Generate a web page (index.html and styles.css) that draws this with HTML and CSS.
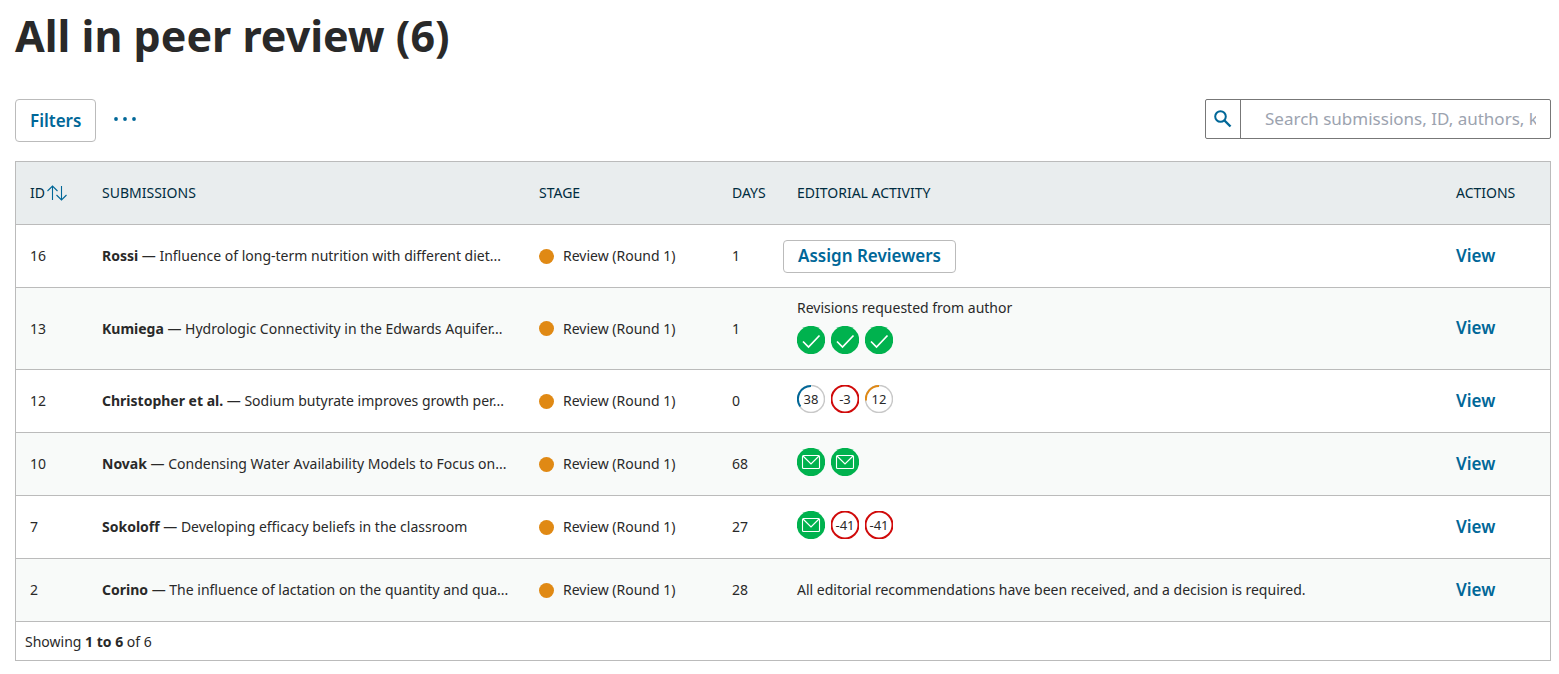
FILE: index.html
```html
<!DOCTYPE html>
<html lang="en">
<head>
<meta charset="utf-8">
<title>All in peer review</title>
<link rel="stylesheet" href="styles.css">
</head>
<body>
<svg class="sprite" aria-hidden="true">
  <symbol id="check" viewBox="0 0 28 28"><circle cx="14" cy="14" r="14.2" fill="#00b24e"/><path d="M6 15.500l5.500 5.500L22.500 9.500" fill="none" stroke="#fff" stroke-width="1.700"/></symbol>
  <symbol id="mail" viewBox="0 0 28 28"><circle cx="14" cy="14" r="14.200" fill="#00b24e"/><rect x="5.500" y="7.500" width="17" height="13" rx="1" fill="none" stroke="#fff" stroke-width="1.100"/><path d="M6 8l8 8 8-8" fill="none" stroke="#fff" stroke-width="1.200"/></symbol>
</svg>
<main class="page">
  <h1 class="title">All in peer review (6)</h1>
  <div class="toolbar">
    <button class="btn btn-filters" type="button">Filters</button>
    <button class="more" type="button" aria-label="More actions"><svg width="24" height="6" viewBox="0 0 24 6" fill="#006798"><circle cx="3" cy="3" r="1.900"/><circle cx="12" cy="3" r="1.900"/><circle cx="21" cy="3" r="1.900"/></svg></button>
    <form class="search">
      <label class="search-icon" for="search" aria-label="Search"><svg width="18" height="18" viewBox="0 0 18 18" fill="none" stroke="#006798"><circle cx="6.500" cy="6.500" r="5.300" stroke-width="2"/><path d="M10.500 10.500l6 6" stroke-width="2.400"/></svg></label>
      <input class="search-input" id="search" type="text" placeholder="Search submissions, ID, authors, keywords etc.">
    </form>
  </div>
  <section class="panel">
    <table class="table">
      <colgroup><col class="c-id"><col class="c-sub"><col class="c-stage"><col class="c-days"><col><col class="c-act"></colgroup>
      <thead>
        <tr>
          <th scope="col"><button class="sort" type="button">ID<svg width="20" height="16" viewBox="0 0 20 16" fill="none" stroke="#006798" stroke-width="1.100"><path d="M5.500 15V1M.5 6l5-5 5 5M14.500 1v14M9.500 10l5 5 5-5"/></svg></button></th>
          <th scope="col">SUBMISSIONS</th><th scope="col">STAGE</th><th scope="col">DAYS</th><th scope="col">EDITORIAL ACTIVITY</th><th scope="col">ACTIONS</th>
        </tr>
      </thead>
      <tbody>
        <tr><td>16</td><td class="name"><b>Rossi</b> — Influence of long-term nutrition with different diet...</td><td><span class="stage">Review (Round 1)</span></td><td>1</td><td class="flush"><button class="btn btn-small" type="button">Assign Reviewers</button></td><td><a class="view" href="#16">View</a></td></tr>
        <tr><td>13</td><td class="name"><b>Kumiega</b> — Hydrologic Connectivity in the Edwards Aquifer...</td><td><span class="stage">Review (Round 1)</span></td><td>1</td><td><div class="activity">Revisions requested from author<div class="icons"><svg class="ico"><use href="#check"/></svg><svg class="ico"><use href="#check"/></svg><svg class="ico"><use href="#check"/></svg></div></div></td><td><a class="view" href="#13">View</a></td></tr>
        <tr><td>12</td><td class="name"><b>Christopher et al.</b> — Sodium butyrate improves growth per...</td><td><span class="stage">Review (Round 1)</span></td><td>0</td><td><div class="icons">
          <span class="count"><svg class="ring" viewBox="0 0 28 28"><circle class="track" cx="14" cy="14" r="13.500"/><path class="blue" d="M14 1A13 13 0 0 0 3.400 21.500"/></svg>38</span>
          <span class="count"><svg class="ring" viewBox="0 0 28 28"><circle class="red" cx="14" cy="14" r="13.500"/></svg>-3</span>
          <span class="count"><svg class="ring" viewBox="0 0 28 28"><circle class="track" cx="14" cy="14" r="13.500"/><path class="orange" d="M14 1A13 13 0 0 0 1 15.500"/></svg>12</span></div></td><td><a class="view" href="#12">View</a></td></tr>
        <tr><td>10</td><td class="name"><b>Novak</b> — Condensing Water Availability Models to Focus on...</td><td><span class="stage">Review (Round 1)</span></td><td>68</td><td><div class="icons"><svg class="ico"><use href="#mail"/></svg><svg class="ico"><use href="#mail"/></svg></div></td><td><a class="view" href="#10">View</a></td></tr>
        <tr><td>7</td><td class="name"><b>Sokoloff</b> — Developing efficacy beliefs in the classroom</td><td><span class="stage">Review (Round 1)</span></td><td>27</td><td><div class="icons"><svg class="ico"><use href="#mail"/></svg>
          <span class="count"><svg class="ring" viewBox="0 0 28 28"><circle class="red" cx="14" cy="14" r="13.500"/></svg>-41</span>
          <span class="count"><svg class="ring" viewBox="0 0 28 28"><circle class="red" cx="14" cy="14" r="13.500"/></svg>-41</span></div></td><td><a class="view" href="#7">View</a></td></tr>
        <tr><td>2</td><td class="name"><b>Corino</b> — The influence of lactation on the quantity and qua...</td><td><span class="stage">Review (Round 1)</span></td><td>28</td><td>All editorial recommendations have been received, and a decision is required.</td><td><a class="view" href="#2">View</a></td></tr>
      </tbody>
    </table>
    <div class="footer">Showing <b>1 to 6</b> of 6</div>
  </section>
</main>
</body>
</html>
```
FILE: styles.css
```css
* { box-sizing: border-box; }
body {
  margin: 0;
  font: 14px/20px "Noto Sans", "Open Sans", sans-serif;
  color: #292929;
  background: #fff;
}
.sprite { display: none; }
.page { padding: 7px 8px 12px 15px; }
.title { margin: 0 0 34px; font-size: 43px; line-height: 58px; font-weight: 700; }
.toolbar { display: flex; align-items: flex-start; margin-bottom: 19px; }
.btn {
  font: 600 17px/20px "Noto Sans", "Open Sans", sans-serif;
  color: #006798;
  background: #fff;
  border: 1px solid #bbb;
  border-radius: 4px;
  padding: 0 14px;
}
.btn-filters { height: 43px; }
.btn-small { height: 33px; }
.more { display: flex; align-items: center; height: 39px; margin-left: 16px; padding: 0 1px; border: 0; background: none; }
.search {
  display: flex;
  width: 346px;
  height: 40px;
  margin-left: auto;
  border: 1px solid #777;
  border-radius: 2px;
}
.search-icon { display: flex; align-items: center; justify-content: center; width: 35px; border-right: 1px solid #777; }
.search-input {
  flex: 1;
  min-width: 0;
  margin: 0;
  padding: 0 14px 0 24px;
  border: 0;
  background: none;
  font: 17px/24px "Noto Sans", "Open Sans", sans-serif;
  color: #292929;
}
.search-input::placeholder { color: #9ca3af; }
.panel { border: 1px solid #bbb; }
.table { width: 100%; table-layout: fixed; border-collapse: separate; border-spacing: 0; }
.c-id { width: 72px; }
.c-sub { width: 437px; }
.c-stage { width: 193px; }
.c-days { width: 65px; }
.c-act { width: 108px; }
th, td { height: 63px; padding: 0 0 0 14px; border-bottom: 1px solid #bbb; text-align: left; vertical-align: middle; }
th { background: #e9edee; color: #002c40; font-weight: 400; }
tbody tr:nth-child(even) td { background: #f8faf9; }
.sort { display: flex; align-items: center; gap: 2px; padding: 0; border: 0; background: none; color: inherit; font: inherit; }
.name { white-space: nowrap; overflow: hidden; text-overflow: ellipsis; }
.stage { display: flex; align-items: center; gap: 9px; }
.stage::before { content: ""; width: 15px; height: 15px; border-radius: 50%; background: #e08914; }
td.flush { padding-left: 0; }
.activity { padding: 10px 0 15px; }
.icons { display: flex; gap: 6px; padding-bottom: 4px; }
.activity .icons { padding: 8px 0 0; }
.ico, .count { width: 28px; height: 28px; overflow: hidden; }
.count { position: relative; font-size: 13px; line-height: 28px; text-align: center; }
.ring { position: absolute; inset: 0; fill: none; }
.track { stroke: #c8c8c8; stroke-width: 1.500; }
.red { stroke: #d00a0a; stroke-width: 2; }
.blue { stroke: #006798; stroke-width: 2; }
.orange { stroke: #e08914; stroke-width: 2; }
.view { color: #006798; font-size: 17px; font-weight: 600; text-decoration: none; }
.footer { padding: 10px 9px 8px; }
```
